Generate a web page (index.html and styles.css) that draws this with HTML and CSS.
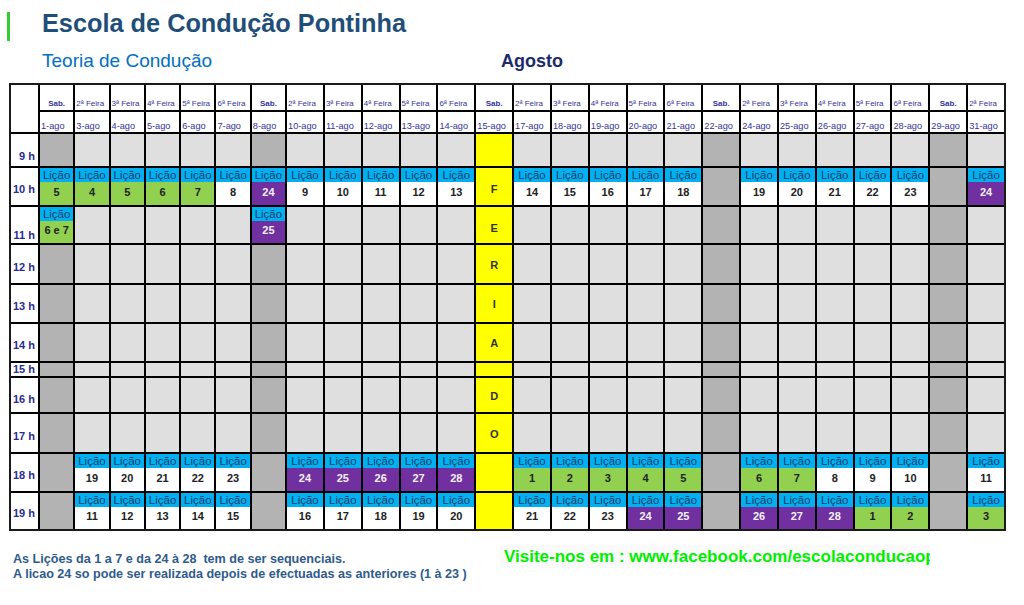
FILE: index.html
```html
<!DOCTYPE html>
<html lang="pt">
<head>
<meta charset="utf-8">
<title>Escola de Condução Pontinha</title>
<link rel="stylesheet" href="styles.css">
</head>
<body>
<header class="top">
  <span class="bar"></span>
  <h1 class="title">Escola de Condução Pontinha</h1>
</header>
<div class="sub">
  <h2 class="subtitle">Teoria de Condução</h2>
  <h2 class="month">Agosto</h2>
</div>

<div class="tbl">
  <!-- header row: days -->
  <div class="corner"></div>
  <div class="hd sb">Sab.</div>
  <div class="hd">2ª Feira</div><div class="hd">3ª Feira</div><div class="hd">4ª Feira</div><div class="hd">5ª Feira</div><div class="hd">6ª Feira</div>
  <div class="hd sb">Sab.</div>
  <div class="hd">2ª Feira</div><div class="hd">3ª Feira</div><div class="hd">4ª Feira</div><div class="hd">5ª Feira</div><div class="hd">6ª Feira</div>
  <div class="hd sb">Sab.</div>
  <div class="hd">2ª Feira</div><div class="hd">3ª Feira</div><div class="hd">4ª Feira</div><div class="hd">5ª Feira</div><div class="hd">6ª Feira</div>
  <div class="hd sb">Sab.</div>
  <div class="hd">2ª Feira</div><div class="hd">3ª Feira</div><div class="hd">4ª Feira</div><div class="hd">5ª Feira</div><div class="hd">6ª Feira</div>
  <div class="hd sb">Sab.</div>
  <div class="hd">2ª Feira</div>

  <!-- header row: dates -->
  <div class="hd dt">1-ago</div>
  <div class="hd dt">3-ago</div><div class="hd dt">4-ago</div><div class="hd dt">5-ago</div><div class="hd dt">6-ago</div><div class="hd dt">7-ago</div>
  <div class="hd dt">8-ago</div>
  <div class="hd dt">10-ago</div><div class="hd dt">11-ago</div><div class="hd dt">12-ago</div><div class="hd dt">13-ago</div><div class="hd dt">14-ago</div>
  <div class="hd dt">15-ago</div>
  <div class="hd dt">17-ago</div><div class="hd dt">18-ago</div><div class="hd dt">19-ago</div><div class="hd dt">20-ago</div><div class="hd dt">21-ago</div>
  <div class="hd dt">22-ago</div>
  <div class="hd dt">24-ago</div><div class="hd dt">25-ago</div><div class="hd dt">26-ago</div><div class="hd dt">27-ago</div><div class="hd dt">28-ago</div>
  <div class="hd dt">29-ago</div>
  <div class="hd dt">31-ago</div>

  <!-- 9 h -->
  <div class="hr r9">9 h</div>
  <div class="s"></div>
  <div class="e"></div><div class="e"></div><div class="e"></div><div class="e"></div><div class="e"></div>
  <div class="s"></div>
  <div class="e"></div><div class="e"></div><div class="e"></div><div class="e"></div><div class="e"></div>
  <div class="f"></div>
  <div class="e"></div><div class="e"></div><div class="e"></div><div class="e"></div><div class="e"></div>
  <div class="s"></div>
  <div class="e"></div><div class="e"></div><div class="e"></div><div class="e"></div><div class="e"></div>
  <div class="s"></div>
  <div class="e"></div>

  <!-- 10 h -->
  <div class="hr">10 h</div>
  <div class="l g"><span class="lb">Lição</span><span class="ln">5</span></div>
  <div class="l g"><span class="lb">Lição</span><span class="ln">4</span></div>
  <div class="l g"><span class="lb">Lição</span><span class="ln">5</span></div>
  <div class="l g"><span class="lb">Lição</span><span class="ln">6</span></div>
  <div class="l g"><span class="lb">Lição</span><span class="ln">7</span></div>
  <div class="l w"><span class="lb">Lição</span><span class="ln">8</span></div>
  <div class="l p"><span class="lb">Lição</span><span class="ln">24</span></div>
  <div class="l w"><span class="lb">Lição</span><span class="ln">9</span></div>
  <div class="l w"><span class="lb">Lição</span><span class="ln">10</span></div>
  <div class="l w"><span class="lb">Lição</span><span class="ln">11</span></div>
  <div class="l w"><span class="lb">Lição</span><span class="ln">12</span></div>
  <div class="l w"><span class="lb">Lição</span><span class="ln">13</span></div>
  <div class="f fl">F</div>
  <div class="l w"><span class="lb">Lição</span><span class="ln">14</span></div>
  <div class="l w"><span class="lb">Lição</span><span class="ln">15</span></div>
  <div class="l w"><span class="lb">Lição</span><span class="ln">16</span></div>
  <div class="l w"><span class="lb">Lição</span><span class="ln">17</span></div>
  <div class="l w"><span class="lb">Lição</span><span class="ln">18</span></div>
  <div class="s"></div>
  <div class="l w"><span class="lb">Lição</span><span class="ln">19</span></div>
  <div class="l w"><span class="lb">Lição</span><span class="ln">20</span></div>
  <div class="l w"><span class="lb">Lição</span><span class="ln">21</span></div>
  <div class="l w"><span class="lb">Lição</span><span class="ln">22</span></div>
  <div class="l w"><span class="lb">Lição</span><span class="ln">23</span></div>
  <div class="s"></div>
  <div class="l p"><span class="lb">Lição</span><span class="ln">24</span></div>

  <!-- 11 h -->
  <div class="hr r11">11 h</div>
  <div class="l g"><span class="lb">Lição</span><span class="ln">6 e 7</span></div>
  <div class="e"></div><div class="e"></div><div class="e"></div><div class="e"></div><div class="e"></div>
  <div class="l p"><span class="lb">Lição</span><span class="ln">25</span></div>
  <div class="e"></div><div class="e"></div><div class="e"></div><div class="e"></div><div class="e"></div>
  <div class="f fl">E</div>
  <div class="e"></div><div class="e"></div><div class="e"></div><div class="e"></div><div class="e"></div>
  <div class="s"></div>
  <div class="e"></div><div class="e"></div><div class="e"></div><div class="e"></div><div class="e"></div>
  <div class="s"></div>
  <div class="e"></div>

  <!-- 12 h -->
  <div class="hr">12 h</div>
  <div class="s"></div>
  <div class="e"></div><div class="e"></div><div class="e"></div><div class="e"></div><div class="e"></div>
  <div class="s"></div>
  <div class="e"></div><div class="e"></div><div class="e"></div><div class="e"></div><div class="e"></div>
  <div class="f">R</div>
  <div class="e"></div><div class="e"></div><div class="e"></div><div class="e"></div><div class="e"></div>
  <div class="s"></div>
  <div class="e"></div><div class="e"></div><div class="e"></div><div class="e"></div><div class="e"></div>
  <div class="s"></div>
  <div class="e"></div>

  <!-- 13 h -->
  <div class="hr">13 h</div>
  <div class="s"></div>
  <div class="e"></div><div class="e"></div><div class="e"></div><div class="e"></div><div class="e"></div>
  <div class="s"></div>
  <div class="e"></div><div class="e"></div><div class="e"></div><div class="e"></div><div class="e"></div>
  <div class="f">I</div>
  <div class="e"></div><div class="e"></div><div class="e"></div><div class="e"></div><div class="e"></div>
  <div class="s"></div>
  <div class="e"></div><div class="e"></div><div class="e"></div><div class="e"></div><div class="e"></div>
  <div class="s"></div>
  <div class="e"></div>

  <!-- 14 h -->
  <div class="hr">14 h</div>
  <div class="s"></div>
  <div class="e"></div><div class="e"></div><div class="e"></div><div class="e"></div><div class="e"></div>
  <div class="s"></div>
  <div class="e"></div><div class="e"></div><div class="e"></div><div class="e"></div><div class="e"></div>
  <div class="f">A</div>
  <div class="e"></div><div class="e"></div><div class="e"></div><div class="e"></div><div class="e"></div>
  <div class="s"></div>
  <div class="e"></div><div class="e"></div><div class="e"></div><div class="e"></div><div class="e"></div>
  <div class="s"></div>
  <div class="e"></div>

  <!-- 15 h -->
  <div class="hr r15">15 h</div>
  <div class="s"></div>
  <div class="e"></div><div class="e"></div><div class="e"></div><div class="e"></div><div class="e"></div>
  <div class="s"></div>
  <div class="e"></div><div class="e"></div><div class="e"></div><div class="e"></div><div class="e"></div>
  <div class="f"></div>
  <div class="e"></div><div class="e"></div><div class="e"></div><div class="e"></div><div class="e"></div>
  <div class="s"></div>
  <div class="e"></div><div class="e"></div><div class="e"></div><div class="e"></div><div class="e"></div>
  <div class="s"></div>
  <div class="e"></div>

  <!-- 16 h -->
  <div class="hr r16">16 h</div>
  <div class="s"></div>
  <div class="e"></div><div class="e"></div><div class="e"></div><div class="e"></div><div class="e"></div>
  <div class="s"></div>
  <div class="e"></div><div class="e"></div><div class="e"></div><div class="e"></div><div class="e"></div>
  <div class="f">D</div>
  <div class="e"></div><div class="e"></div><div class="e"></div><div class="e"></div><div class="e"></div>
  <div class="s"></div>
  <div class="e"></div><div class="e"></div><div class="e"></div><div class="e"></div><div class="e"></div>
  <div class="s"></div>
  <div class="e"></div>

  <!-- 17 h -->
  <div class="hr">17 h</div>
  <div class="s"></div>
  <div class="e"></div><div class="e"></div><div class="e"></div><div class="e"></div><div class="e"></div>
  <div class="s"></div>
  <div class="e"></div><div class="e"></div><div class="e"></div><div class="e"></div><div class="e"></div>
  <div class="f">O</div>
  <div class="e"></div><div class="e"></div><div class="e"></div><div class="e"></div><div class="e"></div>
  <div class="s"></div>
  <div class="e"></div><div class="e"></div><div class="e"></div><div class="e"></div><div class="e"></div>
  <div class="s"></div>
  <div class="e"></div>

  <!-- 18 h -->
  <div class="hr">18 h</div>
  <div class="s"></div>
  <div class="l w"><span class="lb">Lição</span><span class="ln">19</span></div>
  <div class="l w"><span class="lb">Lição</span><span class="ln">20</span></div>
  <div class="l w"><span class="lb">Lição</span><span class="ln">21</span></div>
  <div class="l w"><span class="lb">Lição</span><span class="ln">22</span></div>
  <div class="l w"><span class="lb">Lição</span><span class="ln">23</span></div>
  <div class="s"></div>
  <div class="l p"><span class="lb">Lição</span><span class="ln">24</span></div>
  <div class="l p"><span class="lb">Lição</span><span class="ln">25</span></div>
  <div class="l p"><span class="lb">Lição</span><span class="ln">26</span></div>
  <div class="l p"><span class="lb">Lição</span><span class="ln">27</span></div>
  <div class="l p"><span class="lb">Lição</span><span class="ln">28</span></div>
  <div class="f"></div>
  <div class="l g"><span class="lb">Lição</span><span class="ln">1</span></div>
  <div class="l g"><span class="lb">Lição</span><span class="ln">2</span></div>
  <div class="l g"><span class="lb">Lição</span><span class="ln">3</span></div>
  <div class="l g"><span class="lb">Lição</span><span class="ln">4</span></div>
  <div class="l g"><span class="lb">Lição</span><span class="ln">5</span></div>
  <div class="s"></div>
  <div class="l g"><span class="lb">Lição</span><span class="ln">6</span></div>
  <div class="l g"><span class="lb">Lição</span><span class="ln">7</span></div>
  <div class="l w"><span class="lb">Lição</span><span class="ln">8</span></div>
  <div class="l w"><span class="lb">Lição</span><span class="ln">9</span></div>
  <div class="l w"><span class="lb">Lição</span><span class="ln">10</span></div>
  <div class="s"></div>
  <div class="l w"><span class="lb">Lição</span><span class="ln">11</span></div>

  <!-- 19 h -->
  <div class="hr">19 h</div>
  <div class="s"></div>
  <div class="l w"><span class="lb">Lição</span><span class="ln">11</span></div>
  <div class="l w"><span class="lb">Lição</span><span class="ln">12</span></div>
  <div class="l w"><span class="lb">Lição</span><span class="ln">13</span></div>
  <div class="l w"><span class="lb">Lição</span><span class="ln">14</span></div>
  <div class="l w"><span class="lb">Lição</span><span class="ln">15</span></div>
  <div class="s"></div>
  <div class="l w"><span class="lb">Lição</span><span class="ln">16</span></div>
  <div class="l w"><span class="lb">Lição</span><span class="ln">17</span></div>
  <div class="l w"><span class="lb">Lição</span><span class="ln">18</span></div>
  <div class="l w"><span class="lb">Lição</span><span class="ln">19</span></div>
  <div class="l w"><span class="lb">Lição</span><span class="ln">20</span></div>
  <div class="f"></div>
  <div class="l w"><span class="lb">Lição</span><span class="ln">21</span></div>
  <div class="l w"><span class="lb">Lição</span><span class="ln">22</span></div>
  <div class="l w"><span class="lb">Lição</span><span class="ln">23</span></div>
  <div class="l p"><span class="lb">Lição</span><span class="ln">24</span></div>
  <div class="l p"><span class="lb">Lição</span><span class="ln">25</span></div>
  <div class="s"></div>
  <div class="l p"><span class="lb">Lição</span><span class="ln">26</span></div>
  <div class="l p"><span class="lb">Lição</span><span class="ln">27</span></div>
  <div class="l p"><span class="lb">Lição</span><span class="ln">28</span></div>
  <div class="l g"><span class="lb">Lição</span><span class="ln">1</span></div>
  <div class="l g"><span class="lb">Lição</span><span class="ln">2</span></div>
  <div class="s"></div>
  <div class="l g"><span class="lb">Lição</span><span class="ln">3</span></div>
</div>

<footer class="foot">
  <div class="notes">
    <p>As Lições da 1 a 7 e da 24 à 28&nbsp; tem de ser sequenciais.</p>
    <p>A licao 24 so pode ser realizada depois de efectuadas as anteriores (1 à 23 )</p>
  </div>
  <div class="visit">Visite-nos em : www.facebook.com/escolaconducaopontinha</div>
</footer>
</body>
</html>
```

FILE: styles.css
```css
body {
  margin: 0;
  background: #ffffff;
  font-family: "Liberation Sans", Arial, sans-serif;
}

/* ---------- header ---------- */
.top {
  display: flex;
  align-items: flex-start;
  height: 30px;
  padding-top: 8px;
}
.bar {
  width: 3px;
  height: 29px;
  margin: 4px 0 0 7px;
  background: #33cc33;
}
.title {
  margin: 0 0 0 32px;
  font-size: 25.3px;
  line-height: 30px;
  font-weight: bold;
  color: #1f4e79;
}
.sub {
  display: grid;
  grid-template-columns: 459px auto;
  align-items: baseline;
  margin: 12px 0 0 42px;
}
.subtitle {
  margin: 0;
  font-size: 19px;
  line-height: 22px;
  font-weight: normal;
  color: #0070c0;
}
.month {
  margin: 0;
  font-size: 18px;
  line-height: 22px;
  font-weight: bold;
  color: #1d2b6b;
}

/* ---------- table ---------- */
.tbl {
  margin: 11px 0 0 9px;
  width: 997px;
  box-sizing: border-box;
  display: grid;
  gap: 2px;
  background: #000000;
  border: 2px solid #1a1a1a;
  grid-template-columns: 27px repeat(7, 33.3px) repeat(19, minmax(0, 1fr));
  grid-template-rows: 25px 20px 32px 37px 36px 38px 37px 37px 13px 34px 38px 37px 36px;
}
.corner {
  grid-row: span 2;
  background: #ffffff;
}
.hd {
  background: #ffffff;
  display: flex;
  flex-direction: column;
  justify-content: flex-end;
  padding: 0 0 2px 1px;
  font-size: 8px;
  line-height: 9px;
  color: #33339a;
  white-space: nowrap;
  overflow: hidden;
}
.hd.sb {
  font-weight: bold;
  align-items: center;
  padding-left: 0;
}
.hd.dt {
  font-size: 9.2px;
  line-height: 10px;
  padding-bottom: 1px;
}

.hr {
  background: #ffffff;
  display: flex;
  align-items: flex-end;
  justify-content: flex-end;
  padding: 0 3px 9px 0;
  font-size: 11px;
  line-height: 13px;
  font-weight: bold;
  color: #2b2b8e;
}
.hr.r9 { padding-bottom: 3px; }
.hr.r11 { padding-bottom: 1px; }
.hr.r15 { padding-bottom: 0; align-items: center; }
.hr.r16 { padding-bottom: 6px; }

.e { background: #dfdfdf; }
.s { background: #b3b3b3; }
.f {
  background: #ffff00;
  display: flex;
  align-items: center;
  justify-content: center;
  font-size: 11px;
  font-weight: bold;
  color: #333333;
  padding-top: 1px;
}
.f.fl { padding-top: 5px; }

.l {
  display: flex;
  flex-direction: column;
}
.lb {
  height: 14px;
  line-height: 14px;
  background: #00b0f0;
  font-size: 11.5px;
  text-align: center;
  color: #1f3c66;
  white-space: nowrap;
}
.ln {
  flex: 1;
  display: flex;
  align-items: center;
  justify-content: center;
  padding-bottom: 4px;
  font-size: 11px;
  font-weight: bold;
  color: #222222;
  white-space: nowrap;
}
.g .ln { background: #92d050; }
.w .ln { background: #ffffff; }
.p .ln { background: #7030a0; color: #f2f2f2; }

/* ---------- footer ---------- */
.foot {
  display: flex;
  margin-top: 14px;
}
.notes {
  margin-left: 13px;
  width: 487px;
  padding-top: 7px;
  font-size: 12.6px;
  line-height: 15px;
  font-weight: bold;
  color: #2f5b8c;
  white-space: nowrap;
}
.notes p {
  margin: 0;
}
.visit {
  width: 426px;
  padding-left: 4px;
  height: 23px;
  overflow: hidden;
  white-space: nowrap;
  font-size: 17px;
  line-height: 23px;
  font-weight: bold;
  color: #00ee00;
  background: #fafafa;
}
```
